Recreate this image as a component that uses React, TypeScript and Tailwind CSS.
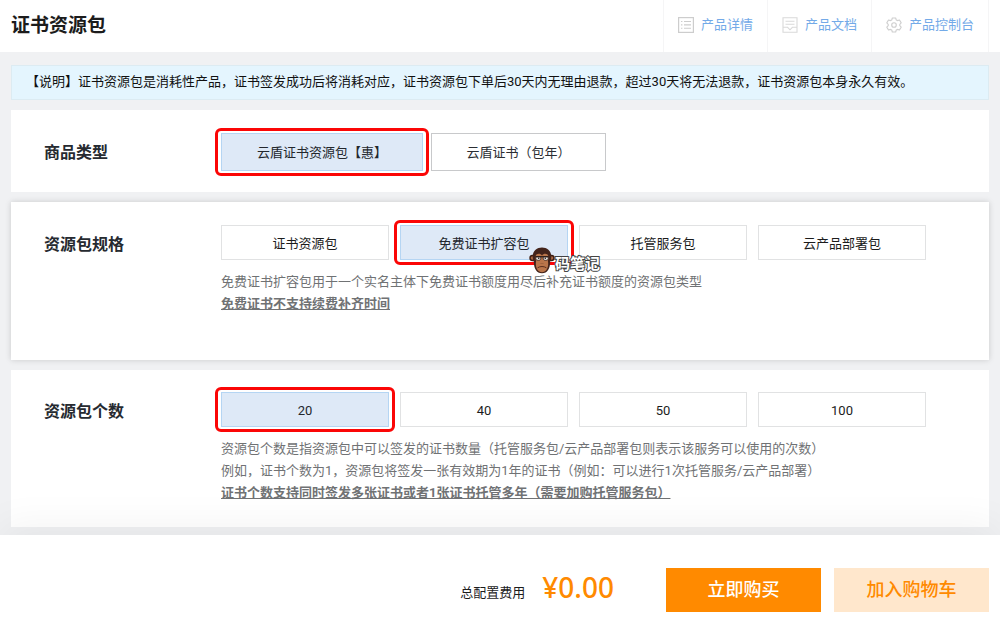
import type { ReactNode } from "react";

type OptionProps = {
  children: ReactNode;
  size?: "md" | "lg" | "xl";
  selected?: boolean;
  overlay?: ReactNode;
};

const sizes = {
  md: "h-[35px] w-[168px]",
  lg: "h-[38px] w-[175px]",
  xl: "h-[38px] w-[202px]",
};

function Option({ children, size = "md", selected = false, overlay }: OptionProps) {
  const tone = selected
    ? "border-[#b5d5f3] bg-[#dee9f7] text-[#23272d]"
    : size === "md"
      ? "border-[#e1e2e3] bg-white text-[#1c1c1c]"
      : "border-[#c8c9cb] bg-white text-[#2b2e33]";

  return (
    <div className="relative">
      <button
        type="button"
        aria-pressed={selected}
        className={`block border pt-0.5 text-[13px] leading-5 ${sizes[size]} ${tone}`}
      >
        {children}
      </button>
      {selected && (
        <span className="pointer-events-none absolute -inset-x-[6px] -inset-y-[5px] rounded-md border-3 border-[#fb0606]" />
      )}
      {overlay}
    </div>
  );
}

function Section({
  title,
  className,
  children,
}: {
  title: string;
  className: string;
  children: ReactNode;
}) {
  return (
    <section className={`flex bg-white pl-[33px] ${className}`}>
      <h2 className="w-[177px] shrink-0 text-base leading-10 font-bold text-[#262a30]">{title}</h2>
      <div className="min-w-0 flex-1">{children}</div>
    </section>
  );
}

function DetailIcon() {
  return (
    <svg viewBox="0 0 16 16" className="size-4" fill="none" stroke="#cdcdcd" aria-hidden="true">
      <rect x="0.6" y="0.6" width="14.8" height="14.8" strokeWidth="1.2" />
      <path d="M3 4.5h1.4M3 7.9h1.4M3 11.3h1.4M6 4.5h7M6 7.9h7M6 11.3h7" strokeWidth="1.1" />
    </svg>
  );
}

function DocIcon() {
  return (
    <svg viewBox="0 0 16 16" className="size-4" fill="none" stroke="#d9d9d9" aria-hidden="true">
      <path d="M1 .8h14v14.4H1z" strokeWidth="1.1" />
      <path d="M3.5 4.2h9M3.5 7.2h9M1 10.3h4.6l2.4 2.5 2.4-2.5H15" strokeWidth="1.1" />
    </svg>
  );
}

function GearIcon() {
  return (
    <svg viewBox="0 0 16 16" className="size-4" fill="none" stroke="#cecece" strokeLinejoin="round" aria-hidden="true">
      <path
        d="M6.3 1h3.4l.5 1.9 1.3.7 2-.6 1.7 2.9-1.4 1.4v1.4l1.4 1.4-1.7 2.9-2-.6-1.3.7-.5 1.9H6.3l-.5-1.9-1.3-.7-2 .6L.8 10.100l1.4-1.4V7.300L.8 5.900 2.500 3l2 .6 1.300-.7z"
        strokeWidth="1.1"
      />
      <circle cx="8" cy="8" r="2.3" strokeWidth="1.1" />
    </svg>
  );
}

function Monkey() {
  return (
    <svg viewBox="0 0 26 27" className="h-[27px] w-[26px]" aria-hidden="true">
      <circle cx="3.6" cy="11" r="3.3" fill="#3b1d13" />
      <circle cx="22.4" cy="11" r="3.3" fill="#3b1d13" />
      <circle cx="3.5" cy="11" r="1.8" fill="#a9653f" />
      <circle cx="22.5" cy="11" r="1.8" fill="#a9653f" />
      <path
        d="M13 .5c5 0 9.4 3.6 9.3 9 0 2.5-1 4-1.2 6.2-.1 5.5-2.6 10.6-8.1 10.6s-8-5.1-8.1-10.6C4.7 13.5 3.7 12 3.7 9.5 3.6 4.1 8 .5 13 .5z"
        fill="#43231a"
      />
      <path
        d="M13 8.4c1.6-2.4 6.3-2.2 6.5 1.3.1 2-.8 3-.5 5 .8 5.3-1.4 10.6-6 10.6s-6.8-5.3-6-10.6c.3-2-.6-3-.5-5 .2-3.5 4.900-3.700 6.500-1.300z"
        fill="#b9754a"
      />
      <path
        d="M6.8 9.8h5v2.4c-1 1.5-4 1.5-5 0zM14.2 9.8h5v2.4c-1 1.5-4 1.5-5 0z"
        fill="#f4f1ec"
        stroke="#2b1a17"
        strokeWidth=".8"
      />
      <path d="M6.3 9.7h13.4" stroke="#2b1a17" strokeWidth="1.2" />
      <circle cx="9.7" cy="11.3" r=".8" fill="#1f1413" />
      <circle cx="16.3" cy="11.3" r=".8" fill="#1f1413" />
      <path d="M12 16.4l.5.5M14 16.4l-.5.5" stroke="#5a2e1d" strokeWidth=".8" />
      <path d="M8.6 20.8c2.5-1.7 6.3-1.7 8.8 0" fill="none" stroke="#5a2e1d" strokeWidth="1" />
    </svg>
  );
}

const links = [
  { label: "产品详情", icon: <DetailIcon /> },
  { label: "产品文档", icon: <DocIcon /> },
  { label: "产品控制台", icon: <GearIcon /> },
];

export default function App() {
  return (
    <div className="min-h-screen bg-white font-[Roboto,'Noto_Sans_CJK_SC',sans-serif] text-[13px] text-[#1c1c1c]">
      <header className="flex h-13 items-stretch justify-between px-[11px]">
        <h1 className="self-center text-[19px] leading-6 font-bold text-[#1c1c1c]">证书资源包</h1>
        <nav className="flex border-r border-[#f5f5f6]">
          {links.map((link) => (
            <a
              key={link.label}
              href="#"
              className="flex items-center gap-[7px] border-l border-[#f5f5f6] px-[14px] pb-[3px] text-[#73aae8]"
            >
              {link.icon}
              {link.label}
            </a>
          ))}
        </nav>
      </header>

      <main className="flex flex-col gap-[10px] bg-[#f0f1f3] px-[11px] pt-[13px] pb-2">
        <p className="border border-[#dcebf2] bg-[#e4f5fe] px-[14px] pt-[6px] pb-[7px] leading-5 text-[#111]">
          【说明】证书资源包是消耗性产品，证书签发成功后将消耗对应，证书资源包下单后30天内无理由退款，超过30天将无法退款，证书资源包本身永久有效。
        </p>

        <Section title="商品类型" className="pt-[23px] pb-[19px]">
          <div className="flex gap-2">
            <Option size="xl" selected>
              云盾证书资源包【惠】
            </Option>
            <Option size="lg">云盾证书（包年）</Option>
          </div>
        </Section>

        <Section title="资源包规格" className="pt-[23px] pb-[45px] shadow-[0_0_6px_rgba(0,0,0,0.16)]">
          <div className="flex gap-[11px]">
            <Option>证书资源包</Option>
            <Option
              selected
              overlay={
                <div className="pointer-events-none absolute top-[21px] left-[129px] z-10 flex items-center">
                  <Monkey />
                  <span className="pt-2 text-[15px] leading-5 font-bold whitespace-nowrap text-white [-webkit-text-stroke:2px_#444] [paint-order:stroke_fill]">
                    码笔记
                  </span>
                </div>
              }
            >
              免费证书扩容包
            </Option>
            <Option>托管服务包</Option>
            <Option>云产品部署包</Option>
          </div>
          <div className="mt-[11px] leading-[22px] text-[#707274]">
            <p>免费证书扩容包用于一个实名主体下免费证书额度用尽后补充证书额度的资源包类型</p>
            <p className="font-bold underline">免费证书不支持续费补齐时间</p>
          </div>
        </Section>

        <Section title="资源包个数" className="pt-[22px] pb-[23px]">
          <div className="flex gap-[11px]">
            <Option selected>20</Option>
            <Option>40</Option>
            <Option>50</Option>
            <Option>100</Option>
          </div>
          <div className="mt-[11px] leading-[22px] text-[#707274]">
            <p>资源包个数是指资源包中可以签发的证书数量（托管服务包/云产品部署包则表示该服务可以使用的次数）</p>
            <p>例如，证书个数为1，资源包将签发一张有效期为1年的证书（例如：可以进行1次托管服务/云产品部署）</p>
            <p className="font-bold underline">证书个数支持同时签发多张证书或者1张证书托管多年（需要加购托管服务包）</p>
          </div>
        </Section>
      </main>

      <footer className="relative flex items-center justify-end bg-white px-[11px] pt-[33px] pb-[9px] shadow-[0_-10px_40px_rgba(0,0,0,0.05)]">
        <span className="mr-[17px] pt-[6px]">总配置费用</span>
        <strong className="mr-[52px] pb-[6px] font-['Noto_Sans',sans-serif] text-[28px] leading-8 font-medium text-[#ff8a00]">
          ¥0.00
        </strong>
        <button type="button" className="mr-[13px] h-11 w-[155px] bg-[#ff8a00] text-lg font-medium text-white">
          立即购买
        </button>
        <button type="button" className="h-11 w-[155px] bg-[#ffe7cc] text-lg font-medium text-[#ff8a00]">
          加入购物车
        </button>
      </footer>
    </div>
  );
}
